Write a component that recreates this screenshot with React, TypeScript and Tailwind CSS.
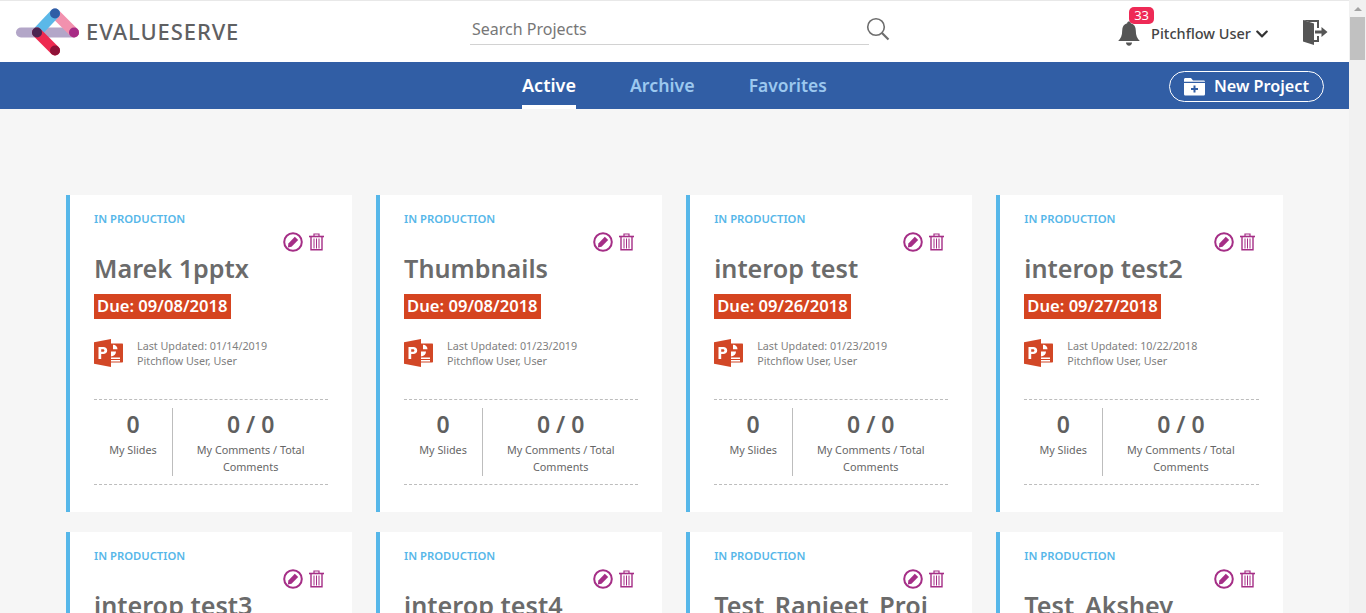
import React from "react";
import { FaChevronDown } from "react-icons/fa";

const FONT = "font-['Noto_Sans','Open_Sans',sans-serif]";

type Project = { name: string; due: string; updated: string };

const PROJECTS: Project[] = [
  { name: "Marek 1pptx", due: "09/08/2018", updated: "01/14/2019" },
  { name: "Thumbnails", due: "09/08/2018", updated: "01/23/2019" },
  { name: "interop test", due: "09/26/2018", updated: "01/23/2019" },
  { name: "interop test2", due: "09/27/2018", updated: "10/22/2018" },
  { name: "interop test3", due: "09/27/2018", updated: "10/22/2018" },
  { name: "interop test4", due: "09/27/2018", updated: "10/22/2018" },
  { name: "Test_Ranjeet_Proj", due: "09/27/2018", updated: "10/22/2018" },
  { name: "Test_Akshey", due: "09/27/2018", updated: "10/22/2018" },
];

const Logo = () => (
  <svg width="64" height="50" viewBox="0 0 64 50" className="shrink-0">
    <g strokeLinecap="round" strokeWidth="10" fill="none">
      <path d="M6 25.500H59" stroke="#b3a6c8" />
      <path d="M40 6.500L59 25.500" stroke="#f291ae" />
      <path d="M22 25.500L40 6.500" stroke="#5bb8e8" />
      <path d="M22 25.500L40 43.500" stroke="#ee2a50" />
    </g>
    <circle cx="40" cy="6.500" r="5" fill="#2f5da6" />
    <circle cx="59" cy="25.500" r="5" fill="#a82b85" />
    <circle cx="22" cy="25.500" r="5" fill="#4a2450" />
    <circle cx="40" cy="43.500" r="5" fill="#8f1238" />
  </svg>
);

const SearchIcon = () => (
  <svg width="24" height="24" viewBox="0 0 24 24" fill="none" stroke="#6e6e6e" strokeWidth="1.600">
    <circle cx="10" cy="10" r="8.300" />
    <path d="M16 16l6.500 6.500" strokeWidth="2.200" />
  </svg>
);

const BellIcon = () => (
  <svg width="24" height="27" viewBox="0 0 24 27" fill="#555">
    <path d="M12 1.500c1.100 0 1.800.7 1.800 1.700 3.300.8 5 3.500 5 7.200 0 5 1.400 8 4 10.600H1.200c2.600-2.600 4-5.600 4-10.600 0-3.700 1.700-6.400 5-7.200 0-1 .7-1.700 1.800-1.700z" />
    <path d="M9 22.500h6c0 1.900-1.300 3.200-3 3.200s-3-1.300-3-3.200z" />
  </svg>
);

const LogoutIcon = () => (
  <svg width="26" height="28" viewBox="0 0 26 28" fill="#555">
    <path d="M1 2l11 3.500V27L1 23.500z" />
    <path d="M1 2h16v8h-2V4H7zM15 18h2v6h-5v-2h3z" />
    <path d="M13 12.500h6.500V9l6 5-6 5v-3.500H13z" />
  </svg>
);

const FolderPlusIcon = () => (
  <svg width="21" height="19" viewBox="0 0 21 19">
    <path d="M0 2.500C0 1.500.7 1 1.500 1h5.500l2 2.500h10.500c.8 0 1.500.5 1.500 1.200H0z" fill="#fff" />
    <path d="M0 6h21v11c0 1-.7 1.500-1.500 1.500h-18C.7 18.500 0 18 0 17z" fill="#fff" />
    <path d="M9.500 8.500h2v2.500H14v2h-2.500v2.500h-2V13H7v-2h2.500z" fill="#315ea5" />
  </svg>
);

const EditIcon = () => (
  <svg width="20" height="20" viewBox="0 0 20 20">
    <circle cx="10" cy="10" r="8.800" fill="none" stroke="#a52e86" strokeWidth="2" />
    <path d="M11.800 4.800l3.400 3.200-6.700 6.800-3.600.7.500-3.900z" fill="#a52e86" />
  </svg>
);

const TrashIcon = () => (
  <svg width="15" height="18" viewBox="0 0 15 18" fill="none" stroke="#a52e86">
    <path d="M0 3.500h15" strokeWidth="1.600" />
    <path d="M5 3V1h5v2" strokeWidth="1.200" />
    <path d="M2 4v12.800h11V4" strokeWidth="1.400" />
    <path d="M5 5.500v10M7.500 5.500v10M10 5.500v10" strokeWidth="1" />
  </svg>
);

const PowerPointIcon = () => (
  <svg width="29" height="28" viewBox="0 0 29 28">
    <path d="M11 4.500h17c.6 0 1 .4 1 1v17c0 .6-.4 1-1 1H11z" fill="#d24726" />
    <path d="M17 7.500a5 5 0 1 0 5 5h-5z" fill="#fff" />
    <path d="M19 5.800a4.500 4.500 0 0 1 4.500 4.500H19z" fill="#fff" />
    <path d="M17 18.500h9V20h-9zM17 21h9v1.500h-9z" fill="#fff" />
    <path d="M0 3.200L17 0v28L0 24.800z" fill="#d24726" />
    <path d="M4.500 8h4.800c2.400 0 3.900 1.300 3.900 3.400 0 2.200-1.600 3.500-4 3.500H7.200V20H4.500zm2.700 2.200v2.600h1.500c1 0 1.700-.5 1.700-1.300s-.7-1.300-1.700-1.300z" fill="#fff" />
  </svg>
);

const ProjectCard = ({ project }: { project: Project }) => (
  <div className="h-[317px] bg-white border-l-4 border-[#56b7e9] pl-6 pr-6 pt-[15px] overflow-hidden">
    <div className="text-[11.250px] leading-[18px] font-semibold text-[#56b7e9]">IN PRODUCTION</div>
    <div className="flex justify-end items-center gap-[6px] mt-[4px] h-[20px] pr-[4px]">
      <EditIcon />
      <TrashIcon />
    </div>
    <h3 className="mt-[-2px] text-[25.200px] leading-[36px] font-semibold text-[#6b6b6b] whitespace-nowrap">
      {project.name}
    </h3>
    <div className="mt-[8px] w-fit bg-[#d54420] px-[3px] pb-[1px] text-[16.600px] leading-[24px] font-semibold text-white">
      Due: {project.due}
    </div>
    <div className="mt-[20px] flex items-start gap-[14px]">
      <PowerPointIcon />
      <div className="text-[10.750px] leading-[15px] text-[#808080]">
        <div>Last Updated: {project.updated}</div>
        <div>Pitchflow User, User</div>
      </div>
    </div>
    <div className="mt-[30px] h-[86px] flex border-y border-dashed border-[#bdbdbd] py-[8px]">
      <div className="w-[79px] border-r border-[#bdbdbd] text-center">
        <div className="mt-[-1px] text-[23px] leading-[34px] font-semibold text-[#5f5f5f]">0</div>
        <div className="text-[10.800px] leading-[17px] text-[#666]">My Slides</div>
      </div>
      <div className="flex-1 text-center px-[14px]">
        <div className="mt-[-1px] text-[23px] leading-[34px] font-semibold text-[#5f5f5f]">0 / 0</div>
        <div className="text-[10.800px] leading-[17px] text-[#666]">My Comments / Total Comments</div>
      </div>
    </div>
  </div>
);

const Scrollbar = () => (
  <div className="w-[17px] shrink-0 bg-[#f1f1f1] flex flex-col items-center">
    <div className="h-[17px] flex items-center justify-center">
      <div className="w-0 h-0 border-x-[4px] border-x-transparent border-b-[4px] border-b-[#a3a3a3]" />
    </div>
    <div className="w-[15px] h-[43px] bg-[#c1c1c1]" />
  </div>
);

export default function App() {
  return (
    <div className={`h-[613px] w-full flex overflow-hidden bg-[#f6f6f6] ${FONT}`}>
      <div className="flex-1 min-w-0">
        <header className="h-[62px] bg-white border-t border-[#e8e8e8] flex items-center relative">
          <div className="pl-[15px] flex items-center w-[470px]">
            <Logo />
            <span className="ml-[7px] text-[22px] tracking-[0.900px] font-medium text-[#5f6062]">EVALUESERVE</span>
          </div>
          <div className="flex items-start h-full">
            <div className="w-[399px] h-[44px] pl-[2px] pt-[13px] border-b border-[#d2d2d2] text-[16px] leading-[30px] text-[#777]">
              Search Projects
            </div>
            <div className="ml-[-3px] mt-[16px]">
              <SearchIcon />
            </div>
          </div>
          <div className="ml-auto flex items-center">
            <div className="relative mt-[3px]">
              <BellIcon />
              <span className="absolute left-[12px] top-[-13px] h-[17px] w-[25px] rounded-[5px] bg-[#ee2a56] text-center text-[13px] leading-[17px] text-white">
                33
              </span>
            </div>
            <span className="ml-[10px] mt-[5px] text-[14.500px] font-medium text-[#444] whitespace-nowrap">Pitchflow User</span>
            <FaChevronDown className="ml-[4px] mt-[4px]" size={14} color="#333" />
            <div className="ml-[33px] mr-[21px] mt-[1px]">
              <LogoutIcon />
            </div>
          </div>
        </header>

        <nav className="h-[47px] bg-[#315ea5] flex items-center relative pl-[522px]">
          <div className="flex gap-[54px] h-full">
            <div className="h-full flex items-center border-b-4 border-white pt-[4px] text-[18px] font-semibold text-white">Active</div>
            <div className="h-full flex items-center text-[17.800px] font-semibold text-[#9cc8ef]">Archive</div>
            <div className="h-full flex items-center text-[17.400px] font-semibold text-[#9cc8ef]">Favorites</div>
          </div>
          <button
            type="button"
            className="absolute right-[25px] top-[9px] h-[31px] w-[155px] rounded-full border border-white flex items-center justify-center gap-[9px] text-[16.200px] font-semibold text-white"
          >
            <FolderPlusIcon />
            New Project
          </button>
        </nav>

        <main className="pt-[86px] pl-[66px] grid grid-cols-[repeat(4,286.250px)] gap-x-[23.850px] gap-y-[20px]">
          {PROJECTS.map((p) => (
            <ProjectCard key={p.name} project={p} />
          ))}
        </main>
      </div>
      <Scrollbar />
    </div>
  );
}
